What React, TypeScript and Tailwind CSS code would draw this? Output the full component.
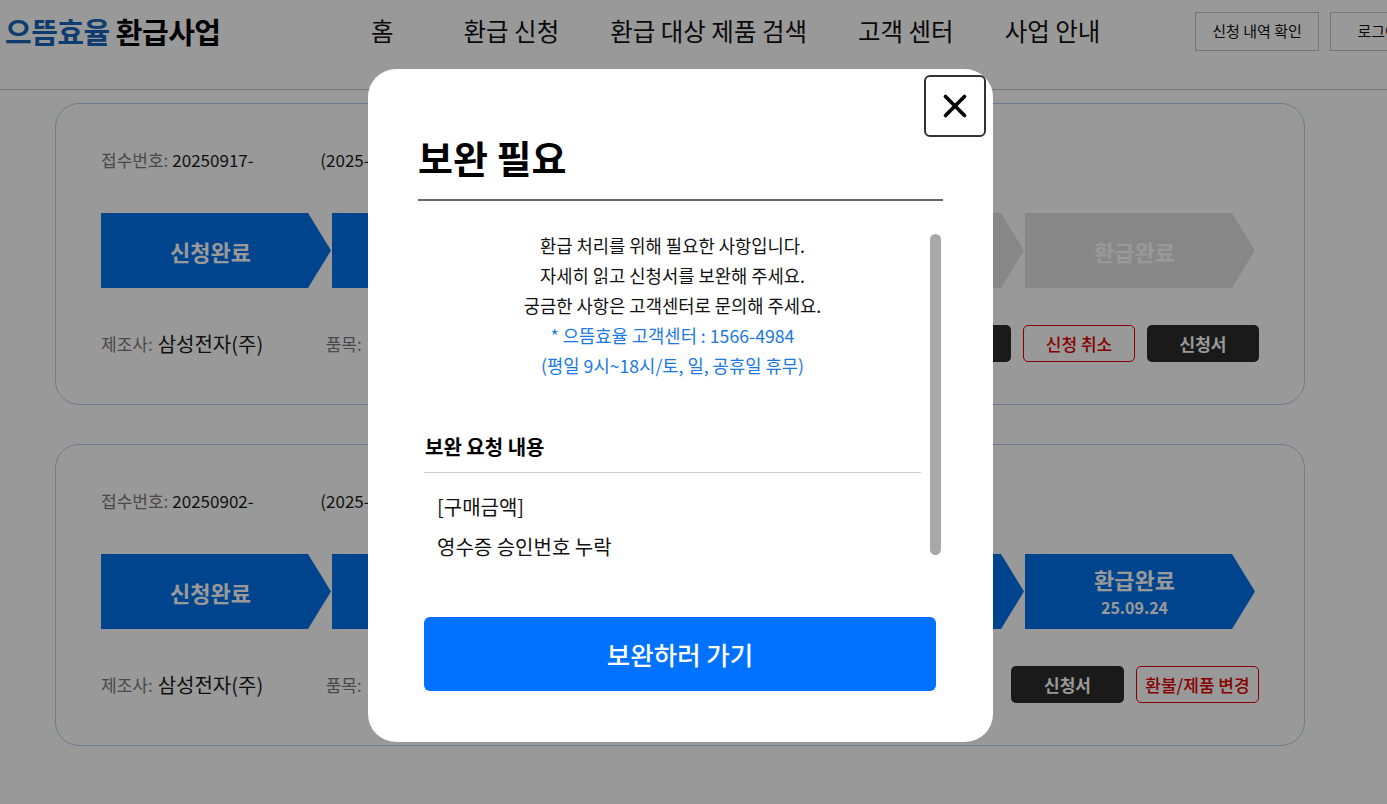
import { X } from "lucide-react"

const font = { fontFamily: '"Noto Sans CJK KR", "Noto Sans", sans-serif' }

const arrow = "[clip-path:polygon(0_0,calc(100%-23px)_0,100%_50%,calc(100%-23px)_100%,0_100%)]"

interface Step {
  label: string
  date?: string
  done: boolean
}

function Steps({ steps }: { steps: Step[] }) {
  return (
    <div className="flex gap-[1px] mt-[40px]">
      {steps.map((s) => (
        <div
          key={s.label}
          className={`${arrow} w-[230px] h-[75px] flex flex-col items-center justify-center pr-[11px] text-white font-bold ${
            s.done ? "bg-[#0072ec]" : "bg-[#e2e2e2]"
          }`}
        >
          <span className="text-[22px] leading-[28px]">{s.label}</span>
          {s.date && <span className="mt-[3px] text-[16px] leading-[22px] font-semibold">{s.date}</span>}
        </div>
      ))}
    </div>
  )
}

function Card({
  no,
  steps,
  buttons,
}: {
  no: string
  steps: Step[]
  buttons: { label: string; kind: "dark" | "red"; w: string }[]
}) {
  return (
    <div className="w-[1250px] h-[302px] rounded-[24px] border border-[#b6cdf0] px-[45px] pt-[43px]">
      <div className="flex items-center h-[26px] text-[17px]">
        <span className="text-[#7a7a7a]">접수번호:</span>
        <span className="ml-[4px] text-[#1a1a1a] w-[148px]">{no}</span>
        <span className="text-[#1a1a1a]">(2025-09-02)</span>
      </div>
      <Steps steps={steps} />
      <div className="flex items-center justify-between mt-[37px] h-[37px]">
        <div className="flex items-center">
          <span className="text-[17px] text-[#7a7a7a]">제조사:</span>
          <span className="ml-[5px] text-[20px] text-[#1a1a1a] w-[168px]">삼성전자(주)</span>
          <span className="text-[17px] text-[#7a7a7a]">품목:</span>
          <span className="ml-[5px] text-[20px] text-[#1a1a1a]">냉장고</span>
        </div>
        <div className="flex gap-[12px]">
          {buttons.map((b) => (
            <button
              key={b.label}
              className={`${b.w} h-[37px] rounded-[5px] text-[17px] ${
                b.kind === "dark"
                  ? "bg-[#2c2c2c] text-white font-semibold"
                  : "border border-[#e00000] text-[#e00000] bg-white font-medium"
              }`}
            >
              {b.label}
            </button>
          ))}
        </div>
      </div>
    </div>
  )
}

export default function App() {
  const labels = ["신청완료", "서류검토", "보완요청", "지급심사", "환급완료"]
  const first: Step[] = labels.map((l, i) => ({ label: l, done: i < 3 }))
  const second: Step[] = labels.map((l, i) => ({
    label: l,
    done: true,
    date: i === 4 ? "25.09.24" : undefined,
  }))

  return (
    <div style={font} className="relative w-[1387px] h-[804px] overflow-hidden bg-white">
      <header className="flex items-center h-[90px] border-b border-[#c8c8c8] pb-[26px]">
        <div className="pl-[5px] text-[29px] font-bold tracking-[-0.5px] w-[371px]">
          <span className="text-[#1566b8]">으뜸효율</span> <span className="text-black">환급사업</span>
        </div>
        <nav className="flex gap-[51px] text-[24.5px] text-[#111]">
          <span className="mr-[19px]">홈</span>
          <span>환급 신청</span>
          <span>환급 대상 제품 검색</span>
          <span>고객 센터</span>
          <span>사업 안내</span>
        </nav>
        <div className="ml-auto flex gap-[11px] -mr-[53px]">
          <button className="w-[124px] h-[39px] border border-[#c4c4c4] text-[15px] text-[#111]">
            신청 내역 확인
          </button>
          <button className="w-[110px] h-[39px] border border-[#c4c4c4] text-[15px] text-[#111]">
            로그아웃
          </button>
        </div>
      </header>

      <main className="flex flex-col gap-[39px] pl-[55px] pt-[13px]">
        <Card
          no="20250917-"
          steps={first}
          buttons={[
            { label: "보완하기", kind: "dark", w: "w-[112px]" },
            { label: "신청 취소", kind: "red", w: "w-[112px]" },
            { label: "신청서", kind: "dark", w: "w-[112px]" },
          ]}
        />
        <Card
          no="20250902-"
          steps={second}
          buttons={[
            { label: "신청서", kind: "dark", w: "w-[113px]" },
            { label: "환불/제품 변경", kind: "red", w: "w-[123px]" },
          ]}
        />
      </main>

      <div className="absolute inset-0 bg-black/40" />

      <div className="absolute left-[368px] top-[69px] w-[625px] h-[673px] bg-white rounded-[28px] px-[50px] pt-[64px]">
        <button className="absolute top-[6px] right-[7px] w-[62px] h-[62px] border-2 border-[#333] rounded-[6px] flex items-center justify-center bg-white">
          <X size={38} strokeWidth={2.3} color="#000" />
        </button>
        <h2 className="text-[38px] leading-[48px] font-bold text-black pb-[18px] border-b-2 border-[#666]">
          보완 필요
        </h2>

        <div className="flex mt-[29px] h-[328px] overflow-hidden pl-[6px]">
          <div className="w-[497px]">
            <div className="text-center text-[17.7px] leading-[30px] text-[#111]">
              <p>환급 처리를 위해 필요한 사항입니다.</p>
              <p>자세히 읽고 신청서를 보완해 주세요.</p>
              <p>궁금한 사항은 고객센터로 문의해 주세요.</p>
              <p className="text-[#1a78e6]">* 으뜸효율 고객센터 : 1566-4984</p>
              <p className="text-[#1a78e6]">(평일 9시~18시/토, 일, 공휴일 휴무)</p>
            </div>
            <h3 className="mt-[54px] pl-[1px] text-[20px] leading-[26px] font-bold text-black pb-[12px] border-b border-[#cfcfcf]">
              보완 요청 내용
            </h3>
            <div className="pt-[14px] pl-[13px] text-[20px] leading-[40px] text-[#111]">
              <p>[구매금액]</p>
              <p>영수증 승인번호 누락</p>
            </div>
          </div>
          <div className="ml-[9px] mt-[4px] w-[11px] h-[321px] rounded-full bg-[#a8a8a8]" />
        </div>

        <button className="mt-[59px] ml-[6px] w-[512px] h-[74px] rounded-[6px] bg-[#0072ff] text-white text-[25.5px] font-medium">
          보완하러 가기
        </button>
      </div>
    </div>
  )
}
